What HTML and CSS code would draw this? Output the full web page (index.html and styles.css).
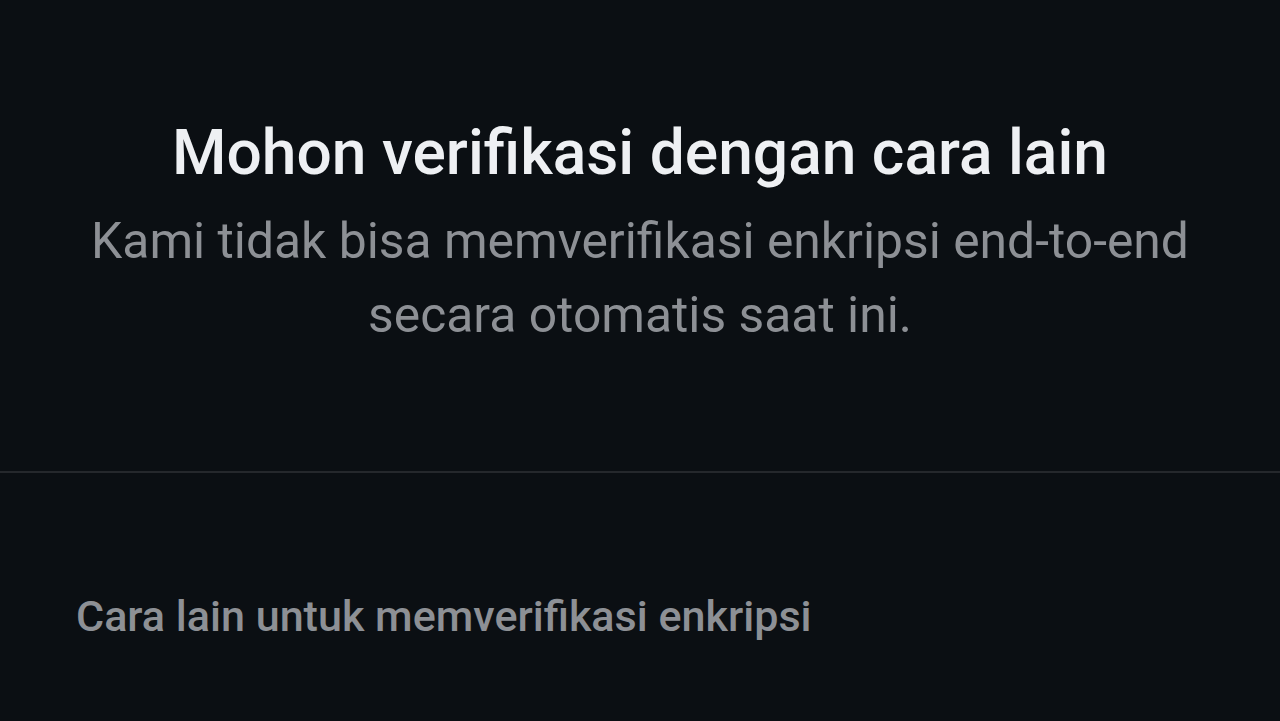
FILE: index.html
```html
<!DOCTYPE html>
<html lang="id">
<head>
<meta charset="utf-8">
<link rel="stylesheet" href="styles.css">
</head>
<body>
<main class="screen">
  <section class="header">
    <h1 class="title">Mohon verifikasi dengan cara lain</h1>
    <p class="subtitle">Kami tidak bisa memverifikasi enkripsi end-to-end<br>secara otomatis saat ini.</p>
  </section>
  <hr class="divider">
  <section class="options">
    <h2 class="section-label">Cara lain untuk memverifikasi enkripsi</h2>
  </section>
</main>
</body>
</html>
```
FILE: styles.css
```css
html, body {
  margin: 0;
  padding: 0;
  background: #0b0f13;
  width: 1280px;
  height: 721px;
  overflow: hidden;
  font-family: Roboto, "Noto Sans", sans-serif;
}
.screen {
  display: flex;
  flex-direction: column;
}
.header {
  padding-top: 117px;
  text-align: center;
}
.title {
  margin: 0;
  font-size: 62.3px;
  font-weight: 500;
  line-height: 72px;
  color: #eef0f3;
}
.subtitle {
  margin: 15px 0 0 0;
  font-size: 49.8px;
  font-weight: 400;
  line-height: 74px;
  color: #8d9095;
}
.divider {
  margin: 119px 0 0 0;
  border: none;
  height: 2px;
  background: #25282c;
}
.options {
  padding: 119px 0 0 76px;
}
.section-label {
  margin: 0;
  font-size: 43.1px;
  font-weight: 500;
  line-height: 50px;
  color: #8d9095;
}
```
